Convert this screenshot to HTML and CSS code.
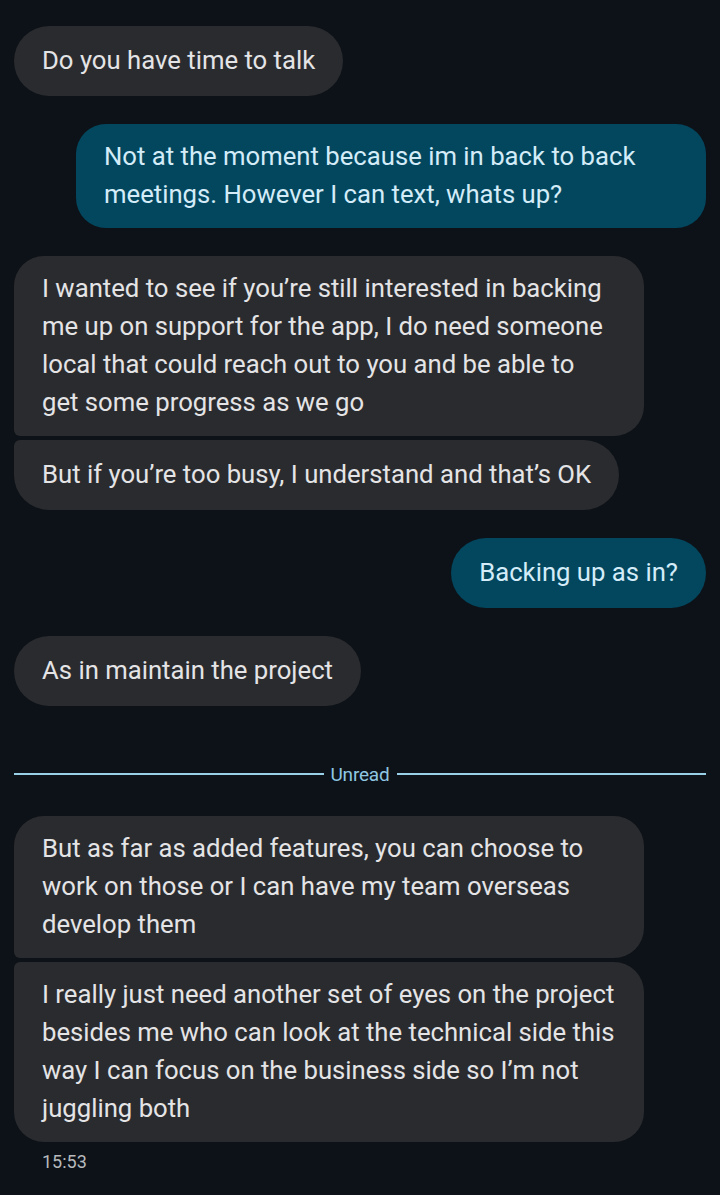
FILE: index.html
```html
<!DOCTYPE html>
<html>
<head>
<meta charset="utf-8">
<link rel="stylesheet" href="styles.css">
</head>
<body>
<div class="chat">
  <div class="bubble in single">Do you have time to talk</div>
  <div class="bubble out multi gap">Not at the moment because im in back to back<br>meetings. However I can text, whats up?</div>
  <div class="bubble in multi gap first">I wanted to see if you’re still interested in backing<br>me up on support for the app, I do need someone<br>local that could reach out to you and be able to<br>get some progress as we go</div>
  <div class="bubble in single last tight">But if you’re too busy, I understand and that’s OK</div>
  <div class="bubble out single gap">Backing up as in?</div>
  <div class="bubble in single gap">As in maintain the project</div>
  <div class="divider"><span class="line"></span><span class="label">Unread</span><span class="line"></span></div>
  <div class="bubble in multi first">But as far as added features, you can choose to<br>work on those or I can have my team overseas<br>develop them</div>
  <div class="bubble in multi last tight">I really just need another set of eyes on the project<br>besides me who can look at the technical side this<br>way I can focus on the business side so I’m not<br>juggling both</div>
  <div class="time">15:53</div>
</div>
</body>
</html>
```
FILE: styles.css
```css
html, body {
  margin: 0;
  padding: 0;
  background: #0c1218;
}
body {
  width: 720px;
  height: 1195px;
  overflow: hidden;
  font-family: Roboto, "Noto Sans", sans-serif;
}
.chat {
  display: flex;
  flex-direction: column;
  align-items: flex-start;
  padding: 26px 14px 0 14px;
}
.bubble {
  box-sizing: border-box;
  max-width: 630px;
  font-size: 25.7px;
  line-height: 38px;
  padding: 13px 28px 15px 28px;
  border-radius: 30px;
}
.bubble.single {
  padding-top: 15px;
  padding-bottom: 17px;
  border-radius: 35px;
}
.bubble.multi {
  width: 630px;
}
.bubble.in {
  background: #2a2b2e;
  color: #e4e4e6;
}
.bubble.out {
  background: #03475f;
  color: #d3ecf8;
  align-self: flex-end;
}
.gap { margin-top: 28px; }
.tight { margin-top: 4px; }
.bubble.in.first { border-bottom-left-radius: 6px; }
.bubble.in.last { border-top-left-radius: 6px; }
.divider {
  align-self: stretch;
  display: flex;
  align-items: center;
  gap: 7px;
  margin-top: 57px;
  margin-bottom: 31px;
  height: 22px;
}
.divider .line {
  flex: 1;
  height: 2px;
  background: #9acfe8;
}
.divider .label {
  font-size: 19px;
  color: #8fc6e2;
  letter-spacing: -0.2px;
}
.time {
  margin-top: 8px;
  margin-left: 28px;
  font-size: 18px;
  line-height: 24px;
  color: #b7b9bc;
}
```
